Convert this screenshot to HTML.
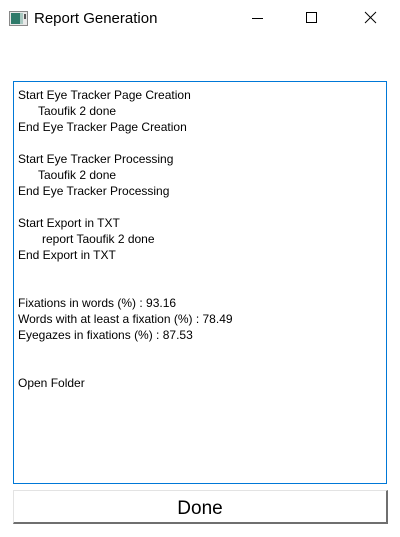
<!DOCTYPE html>
<html><head><style>
body{margin:0;width:400px;height:537px;background:#fff;position:relative;overflow:hidden;font-family:"Liberation Sans",sans-serif;}
.t{position:absolute;left:34px;top:10px;font-size:15px;color:#000;}
.box{position:absolute;left:13px;top:81px;width:372px;height:401px;border:1px solid #0078d7;}
.txt{position:absolute;left:18px;top:87px;font-size:12px;line-height:16px;color:#000;white-space:pre;}
.txt div{height:16px;}
.i1{padding-left:20px;}
.i2{padding-left:24px;}
.btn{position:absolute;left:13px;top:490px;width:372px;height:31px;border-top:1px solid #e3e3e3;border-left:1px solid #e3e3e3;border-right:2px solid #6f6f6f;border-bottom:2px solid #6f6f6f;text-align:center;font-size:19px;line-height:35px;color:#000;}
</style></head><body>
<svg style="position:absolute;left:9px;top:11px" width="19" height="15"><rect x="0.5" y="0.5" width="18" height="14" fill="#e8e8e8" stroke="#888"/><rect x="2" y="2" width="9" height="11" fill="#2f7a6a"/><rect x="11" y="2" width="3" height="11" fill="#a8c8c0"/><rect x="15" y="3" width="2" height="5" fill="#555"/></svg>
<div class="t">Report Generation</div>
<svg style="position:absolute;left:250px;top:10px" width="130" height="16">
<line x1="2" y1="8.5" x2="13" y2="8.5" stroke="#000"/>
<rect x="56.5" y="2.5" width="10" height="10" fill="none" stroke="#000"/>
<line x1="115" y1="2" x2="126" y2="13" stroke="#000"/><line x1="126" y1="2" x2="115" y2="13" stroke="#000"/>
</svg>
<div class="box"></div>
<div class="txt"><div>Start Eye Tracker Page Creation</div><div class="i1">Taoufik 2 done</div><div>End Eye Tracker Page Creation</div><div></div><div>Start Eye Tracker Processing</div><div class="i1">Taoufik 2 done</div><div>End Eye Tracker Processing</div><div></div><div>Start Export in TXT</div><div class="i2">report Taoufik 2 done</div><div>End Export in TXT</div><div></div><div></div><div>Fixations in words (%) : 93.16</div><div>Words with at least a fixation (%) : 78.49</div><div>Eyegazes in fixations (%) : 87.53</div><div></div><div></div><div>Open Folder</div></div>
<div class="btn">Done</div>
</body></html>
